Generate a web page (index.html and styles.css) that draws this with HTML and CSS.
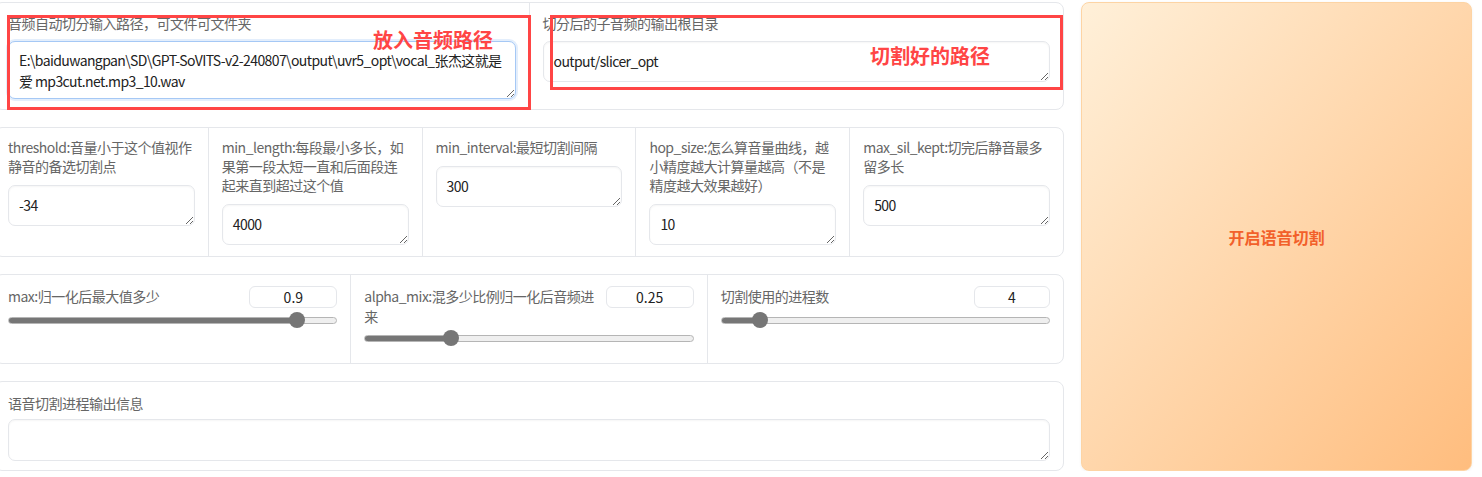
FILE: index.html
```html
<!DOCTYPE html>
<html lang="zh">
<head>
<meta charset="UTF-8" />
<meta name="viewport" content="width=device-width, initial-scale=1.0">
<title>语音切割</title>
<link rel="stylesheet" href="styles.css">
</head>
<body>

<div class="page">
  <div class="left">

    <div class="panel row1">
      <div class="col">
        <label>音频自动切分输入路径，可文件可文件夹</label>
        <textarea class="tall focus">E:\baiduwangpan\SD\GPT-SoVITS-v2-240807\output\uvr5_opt\vocal_张杰这就是爱 mp3cut.net.mp3_10.wav</textarea>
      </div>
      <div class="col">
        <label>切分后的子音频的输出根目录</label>
        <textarea>output/slicer_opt</textarea>
      </div>
    </div>

    <div class="panel row2">
      <div class="col">
        <label>threshold:音量小于这个值视作静音的备选切割点</label>
        <textarea>-34</textarea>
      </div>
      <div class="col">
        <label>min_length:每段最小多长，如果第一段太短一直和后面段连起来直到超过这个值</label>
        <textarea>4000</textarea>
      </div>
      <div class="col">
        <label>min_interval:最短切割间隔</label>
        <textarea>300</textarea>
      </div>
      <div class="col">
        <label>hop_size:怎么算音量曲线，越小精度越大计算量越高（不是精度越大效果越好）</label>
        <textarea>10</textarea>
      </div>
      <div class="col">
        <label>max_sil_kept:切完后静音最多留多长</label>
        <textarea>500</textarea>
      </div>
    </div>

    <div class="panel row3">
      <div class="col">
        <div class="head">
          <label>max:归一化后最大值多少</label>
          <input class="num" type="text" value="0.9">
        </div>
        <input class="range" type="range" min="0" max="1" step="0.05" value="0.9" style="--f:0.9">
      </div>
      <div class="col">
        <div class="head">
          <label>alpha_mix:混多少比例归一化后音频进来</label>
          <input class="num" type="text" value="0.25">
        </div>
        <input class="range" type="range" min="0" max="1" step="0.05" value="0.25" style="--f:0.25">
      </div>
      <div class="col">
        <div class="head">
          <label>切割使用的进程数</label>
          <input class="num small" type="text" value="4">
        </div>
        <input class="range" type="range" min="1" max="32" step="1" value="4" style="--f:0.0968">
      </div>
    </div>

    <div class="panel row4">
      <div class="col">
        <label>语音切割进程输出信息</label>
        <textarea></textarea>
      </div>
    </div>

  </div>

  <button class="start-btn">开启语音切割</button>

  <!-- 标注 -->
  <div class="mark mark1"></div>
  <div class="mark mark2"></div>
  <span class="note note1">放入音频路径</span>
  <span class="note note2">切割好的路径</span>
</div>

</body>
</html>
```

FILE: styles.css
```css
body {margin:0; background:#fff; font-family:"Noto Sans CJK SC", sans-serif; font-size:14px; color:#222; overflow:hidden;}
.page {position:relative; display:flex; gap:17px; padding-top:2px; margin-left:-6px;}
.left {width:1070px; display:flex; flex-direction:column; gap:17px;}
.panel {display:flex; background:#fff; border:1px solid #e5e7eb; border-radius:8px;}
.col {flex:1; min-width:0; display:flex; flex-direction:column; padding:10px 13px 12px;}
.col + .col {border-left:1px solid #e5e7eb;}
label {display:block; color:#666; line-height:20px; letter-spacing:-0.5px;}
textarea {display:block; box-sizing:border-box; width:100%; height:41px; padding:9px 10px; font-family:"Noto Sans CJK SC", sans-serif; font-size:14px; line-height:21px; letter-spacing:-0.6px; color:#222; border:1px solid #e5e7eb; border-radius:7px; box-shadow:inset 0 1px 2px rgba(0,0,0,0.04); outline:none; resize:vertical; overflow:hidden;}
textarea.tall {height:58px; padding:8px 10px 7px;}
textarea.focus {border-color:#a5c8f5; box-shadow:0 0 0 2px #e3eefc;}

/* row 1 */
.row1 .col {padding:10px 13px 10px;}
.row1 textarea {margin-top:8px;}

/* row 2 */
.row2 .col {padding:10px 13px 11px;}
.row2 label {line-height:19px;}
.row2 textarea {margin-top:9px;}

/* row 3 */
.row3 .col {padding:11px 13px 17px;}
.head {display:flex; align-items:flex-start; gap:10px;}
.head label {flex:1;}
.num {box-sizing:border-box; width:88px; height:22px; border:1px solid #e5e7eb; border-radius:6px; text-align:center; font-family:"Noto Sans CJK SC", sans-serif; font-size:14px; color:#222; outline:none; padding:0;}
.num.small {width:76px;}
.range {-webkit-appearance:none; appearance:none; display:block; width:100%; height:16px; margin:4px 0 0; background:transparent;}
.range::-webkit-slider-runnable-track {height:7px; border-radius:4px; box-sizing:border-box; border:1px solid #b5b5b5; background:linear-gradient(to right, #767676 0, #767676 calc(8px + var(--f) * (100% - 16px)), #efefef calc(8px + var(--f) * (100% - 16px)));}
.range::-webkit-slider-thumb {-webkit-appearance:none; width:16px; height:16px; margin-top:-5.5px; border-radius:50%; background:#767676; border:none;}

/* row 4 */
.row4 .col {padding:11px 13px 9px;}
.row4 textarea {margin-top:6px; height:42px;}

.start-btn {width:391px; height:469px; border:1px solid #fdd4a4; border-radius:8px; background:linear-gradient(to bottom right, #fff0d9, #ffbd7e); color:#f2602a; font-family:"Noto Sans CJK SC", sans-serif; font-size:16px; font-weight:bold; cursor:pointer; box-shadow:0 1px 3px rgba(0,0,0,0.06);}

.mark {position:absolute; border:3px solid #ff4545; box-sizing:border-box; pointer-events:none;}
.mark1 {left:13px; top:15px; width:524px; height:95px;}
.mark2 {left:556px; top:15px; width:513px; height:75px;}
.note {position:absolute; color:#ff4545; font-family:"Noto Sans CJK SC", sans-serif; font-size:20px; font-weight:bold; line-height:20px;}
.note1 {left:379px; top:30px;}
.note2 {left:876px; top:46px;}
```
